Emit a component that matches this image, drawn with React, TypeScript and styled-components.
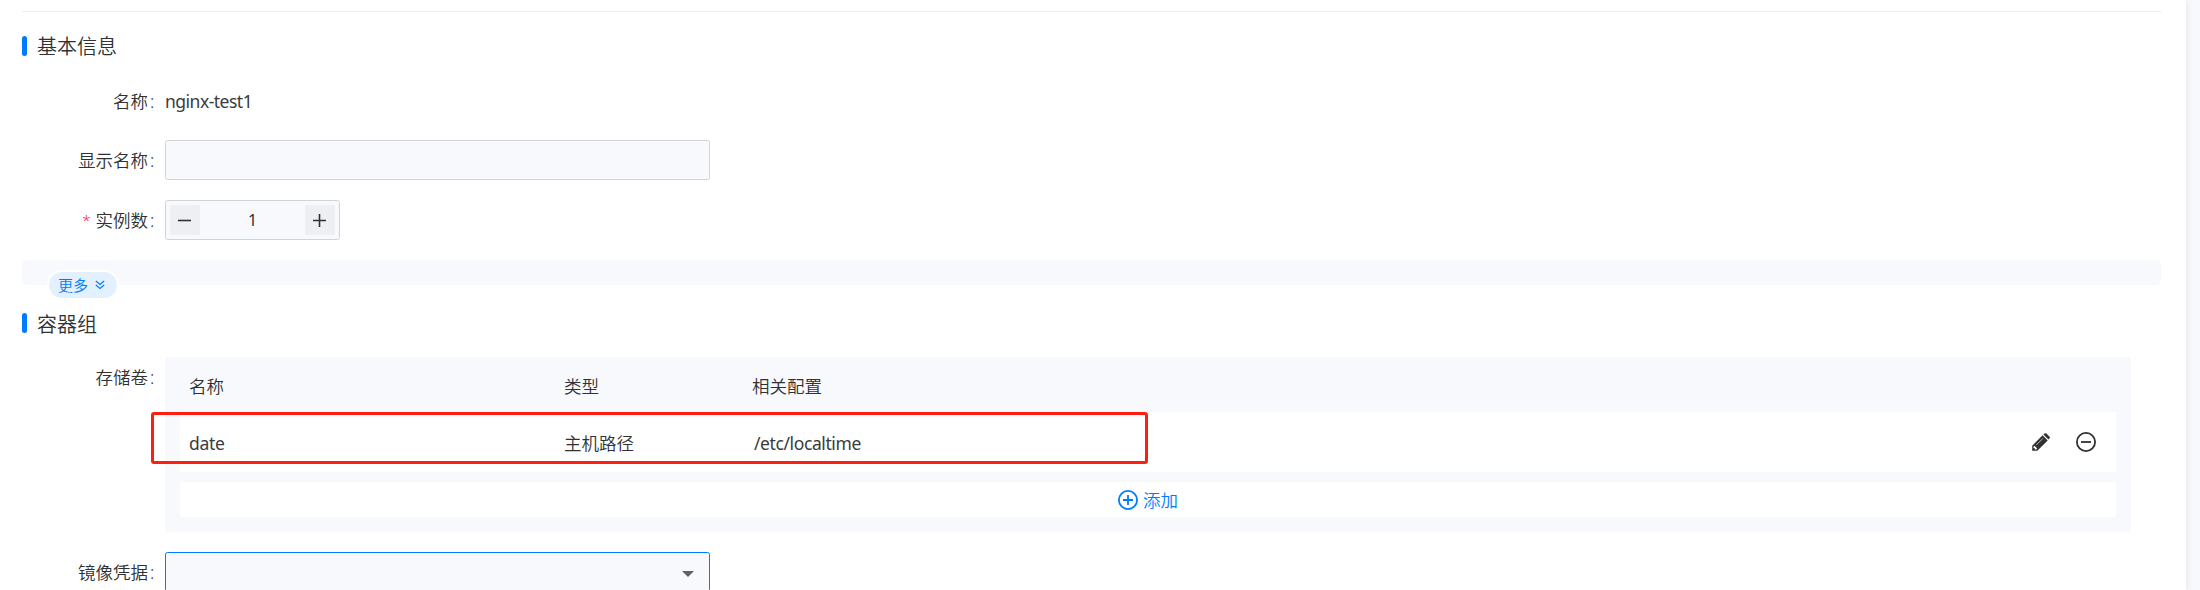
import React from 'react';
import styled, { createGlobalStyle } from 'styled-components';

const GlobalStyle = createGlobalStyle`
  * { box-sizing: border-box; }
  body {
    margin: 0;
    background: #f7f9fd;
    color: #303133;
    font-family: 'Noto Sans', 'Noto Sans CJK SC', sans-serif;
    font-size: 17.5px;
    line-height: 26px;
  }
`;

const Page = styled.main`
  width: 2186px;
  height: 590px;
  overflow: hidden;
  background: #fff;
  padding: 11px 25px 0 22px;
  box-shadow: 0 0 8px rgba(0, 0, 0, 0.1);
`;

const Divider = styled.div`
  height: 1px;
  background: #ebeef0;
`;

const SectionTitle = styled.h2<{ $top: number; $lineHeight?: number }>`
  display: flex;
  align-items: flex-start;
  gap: 10px;
  height: 20px;
  margin: ${(p) => p.$top}px 0 0;
  font-size: 20px;
  font-weight: 350;
  line-height: ${(p) => p.$lineHeight ?? 22}px;
  &::before {
    content: '';
    width: 5px;
    height: 20px;
    border-radius: 3px;
    background: #007bff;
  }
`;

const Field = styled.div<{ $top: number }>`
  display: flex;
  align-items: flex-start;
  margin-top: ${(p) => p.$top}px;
`;

const Label = styled.label`
  display: flex;
  justify-content: flex-end;
  width: 143px;
  padding-right: 9px;
  font-weight: 350;
  line-height: 40px;
  white-space: pre;
`;

const Colon = styled.span`
  width: 8px;
  padding-left: 2px;
`;

const Required = styled.span`
  margin-right: 5px;
  color: #ee1c3c;
  font-size: 15px;
`;

const Latin = styled.span<{ $spacing?: number }>`
  color: #3a3b3d;
  font-weight: 400;
  letter-spacing: ${(p) => p.$spacing ?? 0}px;
  line-height: 40px;
`;

const Input = styled.input`
  width: 545px;
  height: 40px;
  border: 1px solid #d0d3d8;
  border-radius: 2.5px;
  background: #f7f9fd;
  outline: none;
`;

const Stepper = styled.div`
  display: flex;
  align-items: center;
  justify-content: space-between;
  width: 175px;
  height: 40px;
  padding: 0 4px;
  border: 1px solid #d0d3d8;
  border-radius: 2.5px;
  background: #f7f9fd;
  font-size: 16px;
`;

const StepButton = styled.button`
  display: flex;
  align-items: center;
  width: 30px;
  height: 30px;
  padding: 0 0 0 8px;
  border: 0;
  border-radius: 2px;
  background: #eeeff3;
  color: #303133;
`;

const MoreBand = styled.div`
  display: flex;
  height: 25px;
  margin-top: 20px;
  padding: 10px 0 0 25px;
  border-radius: 5px;
  background: #f7f9fd;
`;

const MoreButton = styled.button`
  display: flex;
  align-items: center;
  flex: none;
  gap: 7px;
  width: 72px;
  height: 30px;
  padding: 0 0 0 9px;
  border: 2px solid #fff;
  border-radius: 15px;
  background: #e3f0ff;
  color: #007bff;
  font: 350 15px/24px 'Noto Sans CJK SC', sans-serif;
`;

const VolumePanel = styled.div`
  position: relative;
  width: 1966px;
  height: 175px;
  padding: 0 15px;
  border-radius: 3px;
  background: #f7f9fd;
`;

const VolumeRow = styled.div<{ $header?: boolean }>`
  display: grid;
  grid-template-columns: 375px 188px 1fr auto;
  align-items: center;
  height: ${(p) => (p.$header ? 55 : 60)}px;
  padding: 2px 20px 0 9px;
  background: ${(p) => (p.$header ? 'transparent' : '#fff')};
  font-weight: 350;
`;

const PathCell = styled.span`
  padding-left: 2px;
`;

const Actions = styled.div`
  display: flex;
  align-items: center;
  gap: 26px;
  margin-top: -2px;
`;

const AddButton = styled.button`
  display: flex;
  align-items: center;
  justify-content: center;
  gap: 5px;
  width: 100%;
  height: 35px;
  margin-top: 10px;
  padding: 0;
  border: 0;
  border-radius: 2.5px;
  background: #fff;
  color: #007bff;
  font: 350 17.5px/26px 'Noto Sans CJK SC', sans-serif;
`;

const Highlight = styled.div`
  position: absolute;
  left: -14px;
  top: 55px;
  width: 997px;
  height: 52px;
  border: 3px solid #ff1e10;
  border-radius: 3px;
`;

const Select = styled.div`
  display: flex;
  align-items: center;
  justify-content: flex-end;
  width: 545px;
  height: 40px;
  padding: 4px 15px 0 0;
  border: 1px solid #007bff;
  border-radius: 2.5px;
  background: #f7f9fd;
`;

const Icon = styled.svg`
  display: block;
  flex: none;
`;

const SignIcon = ({ plus = false }: { plus?: boolean }) => (
  <Icon width="13" height="13" viewBox="0 0 13 13" stroke="currentColor" strokeWidth="1.6">
    <path d={plus ? 'M0 6.5h13M6.5 0v13' : 'M0 6.5h13'} />
  </Icon>
);

const CircleIcon = ({ plus = false }: { plus?: boolean }) => (
  <Icon width="20" height="20" viewBox="0 0 20 20" fill="none" stroke="currentColor" strokeWidth="1.8">
    <circle cx="10" cy="10" r="9.1" />
    <path d={plus ? 'M5 10h10M10 5v10' : 'M5 10h10'} />
  </Icon>
);

const PencilIcon = () => (
  <Icon width="18" height="18" viewBox="0 0 18 18">
    <path
      d="M.2 17.8V12.7L10.6 2.3l5.1 5.1L5.3 17.8zM11.4 1.5 12.4.6q1-.9 2 0l3 3q.9 1 0 2l-.9 1z"
      fill="#303133"
    />
    <path d="M1.5 13.8v1.4h1.4v1.4h1.3l1-1-2.7-2.8z" fill="#fff" />
    <path d="m4.3 12 6.5-6.5" stroke="#fff" strokeWidth=".7" />
  </Icon>
);

export default function App() {
  return (
    <>
      <GlobalStyle />
      <Page>
        <Divider />
        <SectionTitle $top={24}>基本信息</SectionTitle>
        <Field $top={25}>
          <Label>名称<Colon>:</Colon></Label>
          <Latin $spacing={-0.5}>nginx-test1</Latin>
        </Field>
        <Field $top={19}>
          <Label>显示名称<Colon>:</Colon></Label>
          <Input />
        </Field>
        <Field $top={20}>
          <Label><Required>*</Required>实例数<Colon>:</Colon></Label>
          <Stepper>
            <StepButton><SignIcon /></StepButton>
            <span>1</span>
            <StepButton><SignIcon plus /></StepButton>
          </Stepper>
        </Field>
        <MoreBand>
          <MoreButton>
            更多
            <Icon width="10" height="10" viewBox="0 0 10 10" fill="none" stroke="currentColor" strokeWidth="1.2">
              <path d="m.8 1 4.2 3.5L9.2 1M.8 5 5 8.5 9.2 5" />
            </Icon>
          </MoreButton>
        </MoreBand>
        <SectionTitle $top={28} $lineHeight={24}>容器组</SectionTitle>
        <Field $top={24}>
          <Label>存储卷<Colon>:</Colon></Label>
          <VolumePanel>
            <VolumeRow $header>
              <span>名称</span>
              <span>类型</span>
              <span>相关配置</span>
            </VolumeRow>
            <VolumeRow>
              <Latin $spacing={-0.3}>date</Latin>
              <span>主机路径</span>
              <PathCell><Latin $spacing={-0.4}>/etc/localtime</Latin></PathCell>
              <Actions>
                <PencilIcon />
                <CircleIcon />
              </Actions>
            </VolumeRow>
            <AddButton><CircleIcon plus />添加</AddButton>
            <Highlight />
          </VolumePanel>
        </Field>
        <Field $top={20}>
          <Label>镜像凭据<Colon>:</Colon></Label>
          <Select>
            <Icon width="12" height="6" viewBox="0 0 12 6"><path d="M0 0h12L6 6z" fill="#606266" /></Icon>
          </Select>
        </Field>
      </Page>
    </>
  );
}
